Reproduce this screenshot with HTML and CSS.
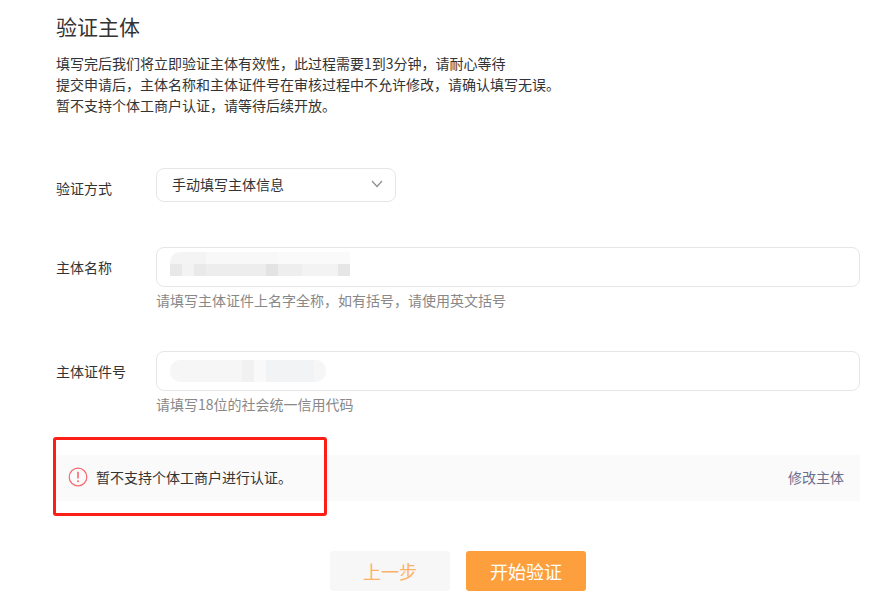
FILE: index.html
```html
<!DOCTYPE html>
<html lang="zh-CN">
<head>
<meta charset="utf-8">
<title>验证主体</title>
<link rel="stylesheet" href="styles.css">
</head>
<body>
	<div id="main-container">
		<h1 class="title">验证主体</h1>
		<div class="intro">
			<p>填写完后我们将立即验证主体有效性，此过程需要1到3分钟，请耐心等待</p>
			<p>提交申请后，主体名称和主体证件号在审核过程中不允许修改，请确认填写无误。</p>
			<p>暂不支持个体工商户认证，请等待后续开放。</p>
		</div>

		<div class="row row-method">
			<label class="row-label">验证方式</label>
			<div class="select">
				<span>手动填写主体信息</span>
				<svg class="select-arrow" width="12" height="8" viewBox="0 0 12 8"><path d="M1 1l5 5.5L11 1" fill="none" stroke="#8c8c8c" stroke-width="1.2"/></svg>
			</div>
		</div>

		<div class="row row-name">
			<label class="row-label">主体名称</label>
			<div class="field">
				<div class="input"><div class="blur blur-name"></div></div>
				<p class="hint">请填写主体证件上名字全称，如有括号，请使用英文括号</p>
			</div>
		</div>

		<div class="row row-id">
			<label class="row-label">主体证件号</label>
			<div class="field">
				<div class="input"><div class="blur blur-id"></div></div>
				<p class="hint">请填写18位的社会统一信用代码</p>
			</div>
		</div>

		<div class="alert">
			<div class="alert-msg">
				<svg width="20" height="20" viewBox="0 0 20 20"><circle cx="10" cy="10" r="8.8" fill="none" stroke="#f7686f" stroke-width="1.2"/><path d="M10 4.8v6.6" stroke="#f7686f" stroke-width="1.6"/><circle cx="10" cy="14.3" r="1" fill="#f7686f"/></svg>
				<span>暂不支持个体工商户进行认证。</span>
			</div>
			<a class="alert-link" href="#edit">修改主体</a>
			<div class="highlight"></div>
		</div>

		<div class="actions">
			<a class="button button-prev" href="#prev">上一步</a>
			<a class="button button-start" href="#start">开始验证</a>
		</div>
	</div>
</body>
</html>
```

FILE: styles.css
```css
* {
	box-sizing: border-box;
}
body {
	margin: 0;
	background: #fff;
	color: #333;
	font-family: "Noto Sans CJK SC", "Liberation Sans", sans-serif;
	font-size: 14px;
}
p {
	margin: 0;
}
#main-container {
	margin-left: 56px;
	width: 804px;
	padding-top: 12px;
}
.title {
	margin: 0;
	font-size: 21px;
	font-weight: 400;
	line-height: 28px;
	color: #333;
}
.intro {
	margin-top: 13px;
	line-height: 21px;
}
.row {
	display: flex;
}
.row-method {
	margin-top: 52px;
}
.row-name {
	margin-top: 45px;
}
.row-id {
	margin-top: 41px;
}
.row-label {
	width: 100px;
	line-height: 20px;
	padding-top: 10px;
}
.select {
	display: flex;
	align-items: center;
	justify-content: space-between;
	width: 240px;
	height: 34px;
	padding: 0 12px 2px 15px;
	border: 1px solid #e6e6e6;
	border-radius: 8px;
}
.field {
	flex: 1;
}
.input {
	height: 40px;
	padding: 4px 0 0 13px;
	border: 1px solid #e6e6e6;
	border-radius: 8px;
}
.blur {
	height: 24px;
}
.blur-name {
	width: 180px;
	border-top-left-radius: 10px;
	background:
		linear-gradient(90deg, #e8e8e8 0 12px, #f3f3f3 12px 24px, #e9e9e9 24px 36px, #ededed 36px 96px, #e3e3e3 96px 108px, #eeeeee 108px 132px, #f3f3f3 132px 168px, #e6e6e6 168px 180px) 0 12px / 100% 12px no-repeat,
		linear-gradient(90deg, #f4f4f4 0 36px, #f8f8f8 36px 108px, #fafafa 108px 180px);
}
.blur-id {
	width: 156px;
	height: 22px;
	margin-top: 4px;
	border-radius: 10px;
	background: linear-gradient(90deg, #f6f6f6 0 72px, #f1f1f1 72px 84px, #f9f9f9 84px 96px, #f2f3f4 96px 144px, #f6f6f6 144px 156px);
}
.hint {
	margin-top: 3px;
	color: #888;
	line-height: 20px;
}
.alert {
	position: relative;
	display: flex;
	align-items: center;
	justify-content: space-between;
	height: 46px;
	margin-top: 41px;
	padding: 0 16px 2px 12px;
	background: #fafafa;
}
.alert-msg {
	display: flex;
	align-items: center;
	gap: 8px;
	color: #333;
}
.alert-link {
	color: #6b6f8f;
	text-decoration: none;
}
.highlight {
	position: absolute;
	left: -3px;
	top: -18px;
	width: 274px;
	height: 79px;
	border: 3px solid #fb1f17;
	border-radius: 3px;
}
.actions {
	display: flex;
	justify-content: center;
	gap: 16px;
	margin-top: 50px;
}
.button {
	width: 120px;
	height: 40px;
	line-height: 40px;
	text-align: center;
	font-size: 18px;
	border-radius: 3px;
	text-decoration: none;
}
.button-prev {
	background: #f7f7f7;
	color: #fcb266;
}
.button-start {
	background: #fc9f3c;
	color: #fff;
}
```
